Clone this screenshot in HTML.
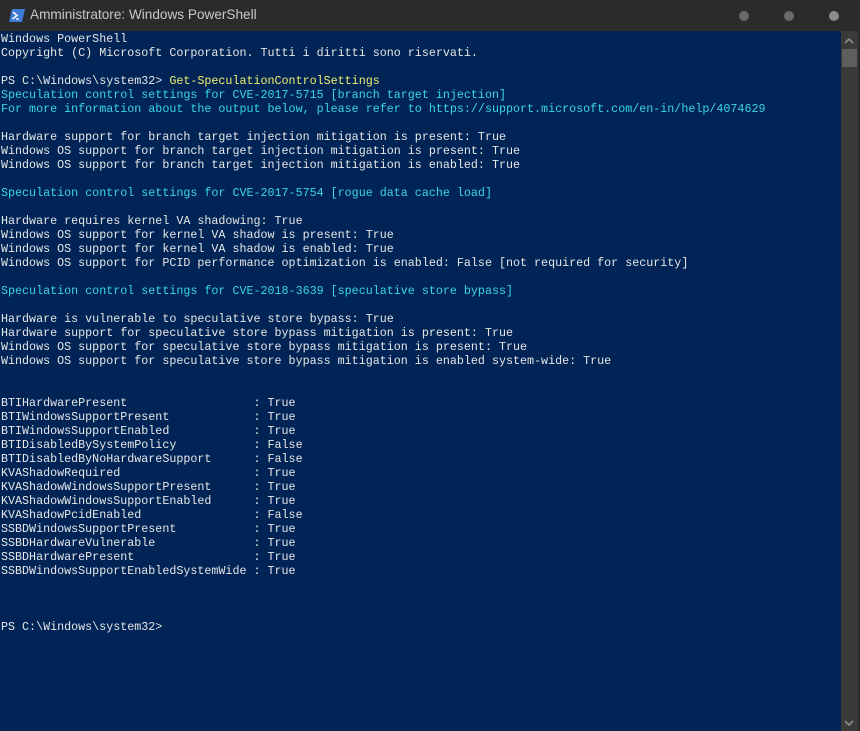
<!DOCTYPE html>
<html><head><meta charset="utf-8"><style>
html,body{margin:0;padding:0;width:860px;height:731px;overflow:hidden;background:#012456;}
#title{position:absolute;left:0;top:0;width:860px;height:31px;background:#2b2b2b;}
#title .t{position:absolute;left:30px;top:7px;font:13.6px "Liberation Sans",sans-serif;color:#c8c8c8;}
.dot{position:absolute;top:11px;width:10px;height:10px;border-radius:50%;background:#6a6a6a;}
#con{position:absolute;left:1px;top:31px;width:840px;height:700px;background:#012456;}
pre{margin:0;position:absolute;left:1px;top:32px;font:11.7px/14px "Liberation Mono",monospace;color:#e6e6e6;white-space:pre;}
.c{color:#3ad4e8}.y{color:#f0ef70}
#sb{position:absolute;left:841px;top:31px;width:17px;height:700px;background:#3a3a3a;}
#thumb{position:absolute;left:842px;top:49px;width:15px;height:18px;background:#5e5e5e;}
#edge{position:absolute;left:858px;top:31px;width:2px;height:700px;background:#2b2b2b;}
</style></head><body>
<div id="title">
<svg style="position:absolute;left:9px;top:9px" width="16" height="13" viewBox="0 0 16 13"><path d="M3 0H16L13 13H0Z" fill="#3e7dd6"/><path d="M4 3L8 6.5L3.5 10" stroke="#fff" stroke-width="1.5" fill="none"/><path d="M7 10H10" stroke="#fff" stroke-width="1.3"/></svg>
<span class="t">Amministratore: Windows PowerShell</span>
<div class="dot" style="left:739px"></div><div class="dot" style="left:784px"></div><div class="dot" style="left:829px;background:#8c8c8c"></div>
</div>
<div id="con"></div>
<div id="sb"></div><div id="thumb"></div><div id="edge"></div>
<svg style="position:absolute;left:844px;top:37px" width="10" height="7"><path d="M1 6L5 2L9 6" stroke="#8a8a8a" stroke-width="1.6" fill="none"/></svg>
<svg style="position:absolute;left:844px;top:720px" width="10" height="7"><path d="M1 1L5 5L9 1" stroke="#8a8a8a" stroke-width="1.6" fill="none"/></svg>
<pre>Windows PowerShell
Copyright (C) Microsoft Corporation. Tutti i diritti sono riservati.

PS C:\Windows\system32&gt; <span class="y">Get-SpeculationControlSettings</span>
<span class="c">Speculation control settings for CVE-2017-5715 [branch target injection]
For more information about the output below, please refer to https://support.microsoft.com/en-in/help/4074629</span>

Hardware support for branch target injection mitigation is present: True
Windows OS support for branch target injection mitigation is present: True
Windows OS support for branch target injection mitigation is enabled: True

<span class="c">Speculation control settings for CVE-2017-5754 [rogue data cache load]</span>

Hardware requires kernel VA shadowing: True
Windows OS support for kernel VA shadow is present: True
Windows OS support for kernel VA shadow is enabled: True
Windows OS support for PCID performance optimization is enabled: False [not required for security]

<span class="c">Speculation control settings for CVE-2018-3639 [speculative store bypass]</span>

Hardware is vulnerable to speculative store bypass: True
Hardware support for speculative store bypass mitigation is present: True
Windows OS support for speculative store bypass mitigation is present: True
Windows OS support for speculative store bypass mitigation is enabled system-wide: True


BTIHardwarePresent                  : True
BTIWindowsSupportPresent            : True
BTIWindowsSupportEnabled            : True
BTIDisabledBySystemPolicy           : False
BTIDisabledByNoHardwareSupport      : False
KVAShadowRequired                   : True
KVAShadowWindowsSupportPresent      : True
KVAShadowWindowsSupportEnabled      : True
KVAShadowPcidEnabled                : False
SSBDWindowsSupportPresent           : True
SSBDHardwareVulnerable              : True
SSBDHardwarePresent                 : True
SSBDWindowsSupportEnabledSystemWide : True



PS C:\Windows\system32&gt;</pre>
</body></html>
